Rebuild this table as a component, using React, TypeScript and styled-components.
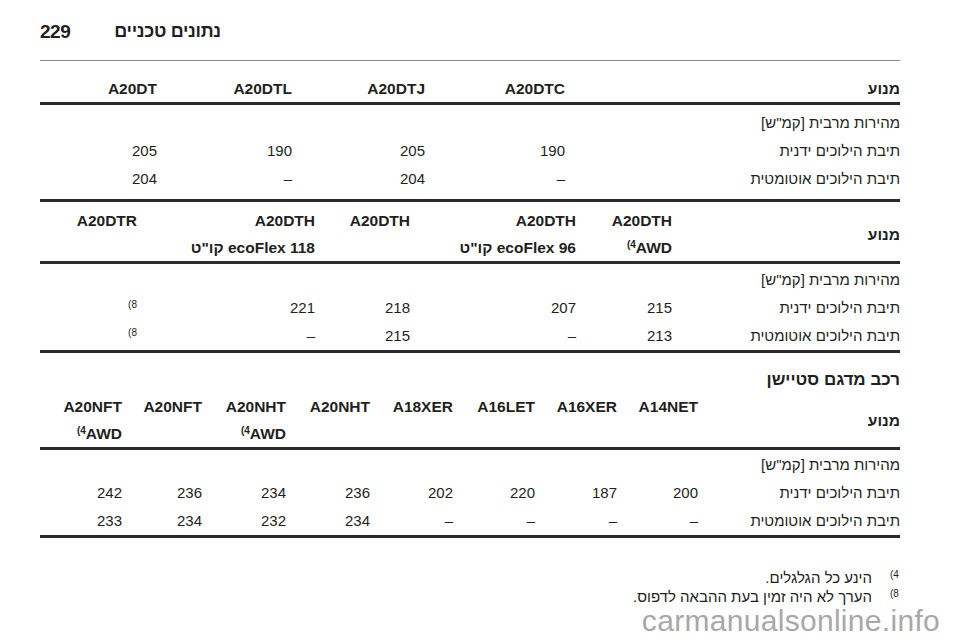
import React from 'react'
import styled, { createGlobalStyle } from 'styled-components'

const GlobalStyle = createGlobalStyle`
  html, body {
    margin: 0;
    padding: 0;
    background: #ffffff;
  }
  body {
    font-family: "Liberation Sans", Arial, "Noto Sans", sans-serif;
    color: #231f20;
  }
  * {
    box-sizing: border-box;
  }
`

const Page = styled.div`
  width: 960px;
  height: 642px;
  overflow: hidden;
  padding: 0 60px 0 40px;
`

const Header = styled.header`
  display: flex;
  align-items: center;
  direction: ltr;
  gap: 44px;
  height: 61px;
  padding-top: 3px;
  border-bottom: 1.5px solid #8a8a8a;
  font-weight: bold;
  font-size: 19px;
`

const PageNum = styled.span`
  letter-spacing: -0.5px;
`

const Title = styled.span`
  direction: rtl;
  font-size: 18px;
  letter-spacing: -0.3px;
`

const Table = styled.div<{ $cols: string; $top?: number }>`
  direction: rtl;
  display: grid;
  grid-template-columns: ${(p) => p.$cols};
  padding-top: ${(p) => p.$top || 0}px;
  font-size: 15px;
`

const HeadCell = styled.div<{ $two: boolean; $top: number }>`
  font-weight: bold;
  font-size: 15.5px;
  text-align: right;
  display: flex;
  flex-direction: column;
  justify-content: ${(p) => (p.$two ? 'flex-start' : 'flex-end')};
  padding-top: ${(p) => p.$top}px;
  padding-bottom: 0;
  height: ${(p) => (p.$two ? 54 + p.$top : 41)}px;
  line-height: 27px;
  white-space: nowrap;
`

const LabelHead = styled.div<{ $two: boolean; $top: number }>`
  font-weight: bold;
  font-size: 15.5px;
  display: flex;
  align-items: ${(p) => (p.$two ? 'center' : 'flex-end')};
  padding-top: ${(p) => p.$top}px;
  line-height: 27px;
  white-space: nowrap;
`

const Label = styled.div<{ $span?: number }>`
  text-align: right;
  white-space: nowrap;
  line-height: 28px;
  grid-column: ${(p) => (p.$span ? `1 / span ${p.$span}` : 'auto')};
`

const Value = styled.div`
  text-align: right;
  white-space: nowrap;
  line-height: 28px;
`

const Thick = styled.div<{ $mt?: number }>`
  height: 3px;
  background: #2b2b2b;
  margin-top: ${(p) => p.$mt || 0}px;
`

const Sup = styled.span`
  font-size: 10px;
  vertical-align: 5px;
  line-height: 0;
`

const Ltr = styled.span`
  direction: ltr;
  unicode-bidi: isolate;
`

const SectionTitle = styled.div`
  direction: rtl;
  font-weight: bold;
  font-size: 17px;
  line-height: 26px;
  margin-top: 14px;
`

const Notes = styled.div`
  direction: rtl;
  margin-top: 30px;
  font-size: 15px;
  line-height: 19px;
  display: flex;
  flex-direction: column;
`

const Note = styled.div`
  display: flex;
  gap: 18px;
`

const NoteMark = styled.span`
  width: 10px;
  font-size: 10px;
  text-align: left;
  line-height: 14px;
  direction: ltr;
`

const Watermark = styled.div`
  direction: ltr;
  text-align: right;
  margin-right: -40px;
  font-size: 30px;
  line-height: 30px;
  color: #a8a8a8;
  letter-spacing: 0.3px;
`

const dash = '–'
const maxSpeed = 'מהירות מרבית [קמ"ש]'
const manual = 'תיבת הילוכים ידנית'
const auto = 'תיבת הילוכים אוטומטית'
const engine = 'מנוע'

const awd = (
  <Ltr>
    <Sup>(4</Sup>AWD
  </Ltr>
)
const n8 = (
  <Ltr>
    <Sup>(8</Sup>
  </Ltr>
)

type Col = { name: string; sub?: React.ReactNode; manual: React.ReactNode; auto: React.ReactNode }

const t1: Col[] = [
  { name: 'A20DTC', manual: '190', auto: dash },
  { name: 'A20DTJ', manual: '205', auto: '204' },
  { name: 'A20DTL', manual: '190', auto: dash },
  { name: 'A20DT', manual: '205', auto: '204' },
]

const t2: Col[] = [
  { name: 'A20DTH', sub: awd, manual: '215', auto: '213' },
  { name: 'A20DTH', sub: 'ecoFlex 96 קו"ט', manual: '207', auto: dash },
  { name: 'A20DTH', manual: '218', auto: '215' },
  { name: 'A20DTH', sub: 'ecoFlex 118 קו"ט', manual: '221', auto: dash },
  { name: 'A20DTR', manual: n8, auto: n8 },
]

const t3: Col[] = [
  { name: 'A14NET', manual: '200', auto: dash },
  { name: 'A16XER', manual: '187', auto: dash },
  { name: 'A16LET', manual: '220', auto: dash },
  { name: 'A18XER', manual: '202', auto: dash },
  { name: 'A20NHT', manual: '236', auto: '234' },
  { name: 'A20NHT', sub: awd, manual: '234', auto: '232' },
  { name: 'A20NFT', manual: '236', auto: '234' },
  { name: 'A20NFT', sub: awd, manual: '242', auto: '233' },
]

function SpecTable({
  cols,
  widths,
  twoLine,
  headTop,
  rowsTop,
}: {
  cols: Col[]
  widths: string
  twoLine: boolean
  headTop: number
  rowsTop: number
}) {
  return (
    <>
      <Table $cols={widths}>
        <LabelHead $two={twoLine} $top={headTop}>
          {engine}
        </LabelHead>
        {cols.map((c, i) => (
          <HeadCell key={i} $two={twoLine} $top={headTop}>
            <span>{c.name}</span>
            {twoLine && <span>{c.sub ?? '\u00a0'}</span>}
          </HeadCell>
        ))}
      </Table>
      <Thick />
      <Table $cols={widths} $top={rowsTop}>
        <Label $span={cols.length + 1}>{maxSpeed}</Label>
        <Label>{manual}</Label>
        {cols.map((c, i) => (
          <Value key={i}>{c.manual}</Value>
        ))}
        <Label>{auto}</Label>
        {cols.map((c, i) => (
          <Value key={i}>{c.auto}</Value>
        ))}
      </Table>
    </>
  )
}

export default function App() {
  return (
    <Page>
      <GlobalStyle />
      <Header>
        <PageNum>229</PageNum>
        <Title>נתונים טכניים</Title>
      </Header>

      <SpecTable
        cols={t1}
        widths="335px 140px 133px 135px 1fr"
        twoLine={false}
        headTop={0}
        rowsTop={4}
      />
      <Thick $mt={6} />

      <SpecTable
        cols={t2}
        widths="228px 96px 166px 95px 178px 1fr"
        twoLine={true}
        headTop={5}
        rowsTop={2}
      />
      <Thick />

      <SectionTitle>רכב מדגם סטיישן</SectionTitle>
      <SpecTable
        cols={t3}
        widths="202px 81px 82px 82px 83px 84px 84px 80px 1fr"
        twoLine={true}
        headTop={0}
        rowsTop={1}
      />
      <Thick />

      <Notes>
        <Note>
          <NoteMark>(4</NoteMark>
          <span>הינע כל הגלגלים.</span>
        </Note>
        <Note>
          <NoteMark>(8</NoteMark>
          <span>הערך לא היה זמין בעת ההבאה לדפוס.</span>
        </Note>
      </Notes>
      <Watermark>carmanualsonline.info</Watermark>
    </Page>
  )
}
